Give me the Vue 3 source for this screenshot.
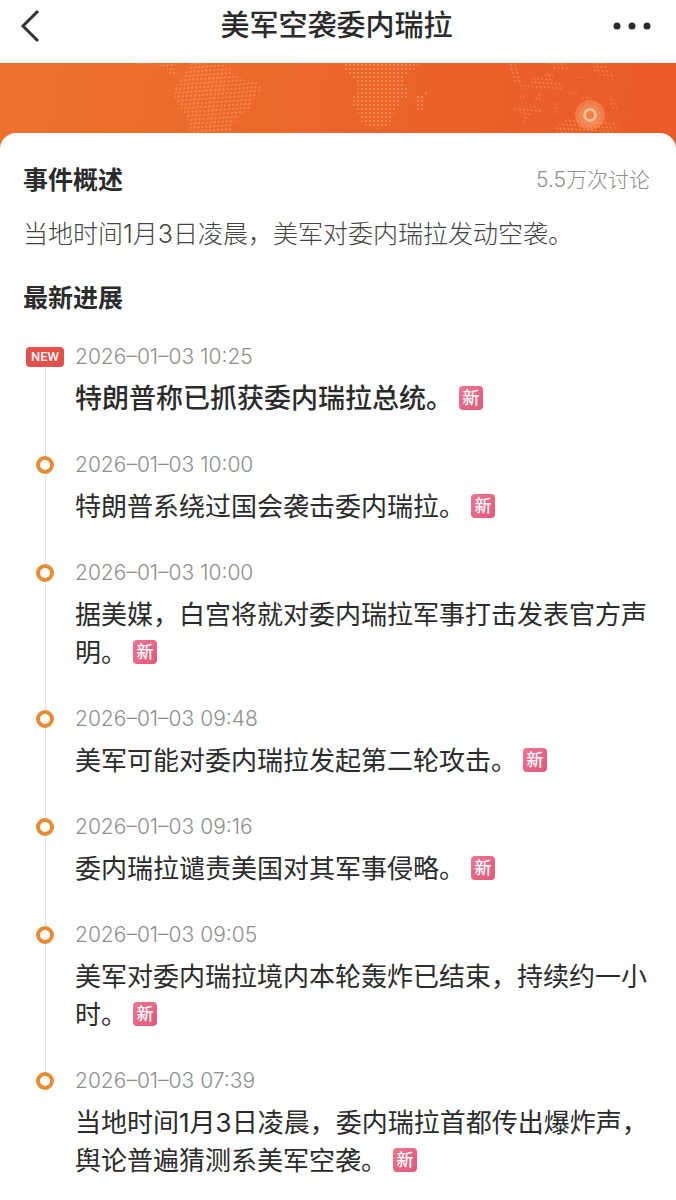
<script setup>
const title = '美军空袭委内瑞拉'
const discuss = '5.5万次讨论'
const summary = '当地时间1月3日凌晨，美军对委内瑞拉发动空袭。'

const events = [
  { id: 1, time: '2026–01–03 10:25', text: '特朗普称已抓获委内瑞拉总统。', latest: true },
  { id: 2, time: '2026–01–03 10:00', text: '特朗普系绕过国会袭击委内瑞拉。' },
  { id: 3, time: '2026–01–03 10:00', text: '据美媒，白宫将就对委内瑞拉军事打击发表官方声明。' },
  { id: 4, time: '2026–01–03 09:48', text: '美军可能对委内瑞拉发起第二轮攻击。' },
  { id: 5, time: '2026–01–03 09:16', text: '委内瑞拉谴责美国对其军事侵略。' },
  { id: 6, time: '2026–01–03 09:05', text: '美军对委内瑞拉境内本轮轰炸已结束，持续约一小时。' },
  { id: 7, time: '2026–01–03 07:39', text: '当地时间1月3日凌晨，委内瑞拉首都传出爆炸声，舆论普遍猜测系美军空袭。' }
]
</script>

<template>
  <div class="page">
    <header class="navbar">
      <button class="nav-btn" type="button" aria-label="返回">
        <svg width="20" height="34" viewBox="0 0 20 34">
          <path d="M18 2 L3 17 L18 32" fill="none" stroke="#333" stroke-width="3" />
        </svg>
      </button>
      <h1>{{ title }}</h1>
      <button class="nav-btn more" type="button" aria-label="更多">
        <svg width="38" height="8" viewBox="0 0 38 8" fill="#2b2b2b">
          <circle cx="4" cy="4" r="3.5" />
          <circle cx="19" cy="4" r="3.5" />
          <circle cx="34" cy="4" r="3.5" />
        </svg>
      </button>
    </header>

    <div class="banner">
      <svg class="map" viewBox="0 0 676 86" preserveAspectRatio="xMidYMin slice" aria-hidden="true">
        <defs>
          <pattern id="dots" width="4" height="4" patternUnits="userSpaceOnUse">
            <circle cx="2" cy="2" r="1" fill="#f8a468" fill-opacity="0.75" />
          </pattern>
          <pattern id="dotsTilt" width="4" height="4" patternUnits="userSpaceOnUse" patternTransform="rotate(-4) skewX(-12)">
            <circle cx="2" cy="2" r="1" fill="#f8a468" fill-opacity="0.7" />
          </pattern>
          <pattern id="dotsEast" width="4" height="4" patternUnits="userSpaceOnUse" patternTransform="rotate(4) skewX(20)">
            <circle cx="2" cy="2" r="1" fill="#f8a468" fill-opacity="0.6" />
          </pattern>
        </defs>
        <!-- south america -->
        <g fill="url(#dotsTilt)">
          <path d="M190 0H216L230 4L232 11L244 17L258 18L263 27L256 30L250 47L240 51L232 62L230 71H190L186 54L180 45L175 35L174 25L178 20L183 11Z" />
          <path d="M137 0H178V2L172 4L178 8L177 15L168 10L166 3H137Z" />
        </g>
        <!-- africa and madagascar -->
        <g fill="url(#dots)">
          <path d="M344 0H420L412 8L404 14L406 24L411 33L402 36L397 45L392 53L390 62L378 66L364 62L358 50L353 41L354 32L358 28L357 18L350 12L344 8Z" />
          <path d="M416 32H424V28H428V32H425V45L420 51L416 44Z" />
        </g>
        <!-- asia, islands and australia -->
        <g fill="url(#dotsEast)">
          <path d="M508 0H516L519 12L522 19H514Z" />
          <path d="M530 15H544L546 8L553 12L552 18L565 22L560 28L540 27L532 25L518 26V22L532 23Z" />
          <path d="M548 0H564L571 7L565 9L553 6Z" />
          <path d="M593 0H604L608 8L615 11L613 17L602 14L594 8Z" />
          <path d="M577 12H581V15H577Z" />
          <path d="M587 7H591V11H587Z" />
          <path d="M520 31H527V35H520Z" />
          <path d="M535 32L543 28V36L534 38Z" />
          <path d="M568 31L577 26V31L570 34Z" />
          <path d="M516 42L522 44L536 43L545 50L532 51L528 53L526 61L522 59L524 52L514 47Z" />
          <path d="M553 40H557L559 50H555Z" />
          <path d="M583 32H591V37H583Z" />
          <path d="M610 35L616 38L618 47H613Z" />
          <path d="M624 50H628V53H624Z" />
          <path d="M567 54L578 57H604L618 61L619 65L610 71H558L552 63L560 61Z" />
        </g>
        <circle cx="590" cy="52" r="15" fill="#fbb683" fill-opacity="0.36" />
        <circle cx="590" cy="52" r="11" fill="#fbb683" fill-opacity="0.2" />
        <circle cx="590" cy="52" r="5.5" fill="#ee8049" stroke="#fac39c" stroke-width="2.6" />
      </svg>
    </div>

    <main class="card">
      <div class="card-head">
        <h2>事件概述</h2>
        <span class="discuss">{{ discuss }}</span>
      </div>
      <p class="summary">{{ summary }}</p>

      <h2>最新进展</h2>
      <ol class="timeline">
        <li v-for="item in events" :key="item.id" class="event" :class="{ latest: item.latest }">
          <div class="marker">
            <span v-if="item.latest" class="new-tag">NEW</span>
            <span v-else class="ring"></span>
          </div>
          <div class="event-body">
            <time>{{ item.time }}</time>
            <p>{{ item.text }}<span class="fresh">新</span></p>
          </div>
        </li>
      </ol>
    </main>
  </div>
</template>

<style>
body {
  margin: 0;
  background: #fff;
}
</style>

<style scoped>
.page {
  font-family: Inter, "Noto Sans CJK SC", sans-serif;
  color: #2b2b2b;
}
h1,
h2,
p,
ol {
  margin: 0;
  padding: 0;
}
.navbar {
  display: flex;
  align-items: center;
  justify-content: space-between;
  height: 51px;
  padding: 0 25px 12px 20px;
}
.navbar h1 {
  font-size: 29px;
  line-height: 40px;
  font-weight: 500;
}
.nav-btn {
  display: flex;
  align-items: center;
  width: 40px;
  height: 40px;
  padding: 0;
  border: none;
  background: none;
}
.nav-btn.more {
  justify-content: flex-end;
  width: 38px;
}
.banner {
  height: 86px;
  background: linear-gradient(100deg, #ee722d 0%, #eb672b 45%, #ea5a28 100%);
}
.map {
  display: block;
  width: 100%;
  height: 100%;
}
.card {
  position: relative;
  margin-top: -16px;
  padding: 28px 26px 0 23px;
  border-radius: 16px 16px 0 0;
  background: #fff;
}
.card-head {
  display: flex;
  align-items: center;
  justify-content: space-between;
}
h2 {
  font-size: 25px;
  line-height: 38px;
  font-weight: 700;
}
.discuss {
  font-size: 21px;
  line-height: 32px;
  font-weight: 300;
  color: #8e8e8e;
}
.summary {
  margin: 16px 0 26px;
  font-size: 25px;
  line-height: 38px;
  font-weight: 300;
  color: #444;
}
.timeline {
  margin-top: 24px;
  list-style: none;
}
.event {
  position: relative;
  display: flex;
  gap: 8px;
  padding-bottom: 31px;
}
.event:not(:last-child)::before {
  content: "";
  position: absolute;
  top: 16px;
  bottom: -16px;
  left: 22px;
  width: 1px;
  background: #e2e2e2;
}
.marker {
  position: relative;
  display: flex;
  flex: none;
  align-items: center;
  justify-content: center;
  width: 44px;
  height: 32px;
}
.ring {
  box-sizing: border-box;
  width: 18px;
  height: 18px;
  border: 4px solid #e68c35;
  border-radius: 50%;
  background: #fff;
}
.new-tag {
  width: 38px;
  border-radius: 4px;
  background: #e4504b;
  color: #fff;
  font-family: Roboto, sans-serif;
  font-size: 13px;
  line-height: 20px;
  font-weight: 500;
  text-align: center;
}
.event-body {
  flex: 1;
}
time {
  display: block;
  margin-bottom: 7px;
  font-size: 21px;
  line-height: 32px;
  font-weight: 300;
  color: #8e8e8e;
}
.event-body p {
  font-size: 26px;
  line-height: 38px;
}
.latest .event-body p {
  font-size: 27px;
  font-weight: 500;
}
.fresh {
  display: inline-block;
  width: 24px;
  margin-left: 6px;
  border-radius: 4px;
  background: linear-gradient(135deg, #ee7590, #e2587a);
  color: #fff;
  font-size: 17px;
  line-height: 24px;
  font-weight: 500;
  text-align: center;
  vertical-align: 4px;
}
</style>
